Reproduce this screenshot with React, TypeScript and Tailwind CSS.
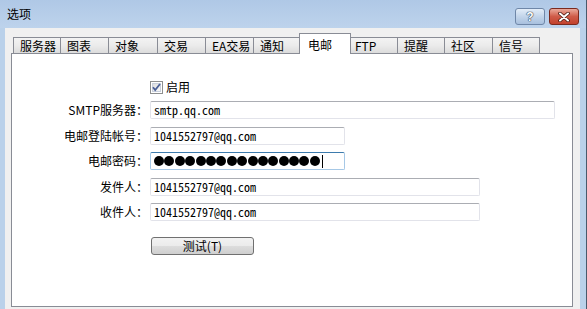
import React from "react";

const tabs: { label: string; w: number; sel?: boolean }[] = [
  { label: "服务器", w: 47 },
  { label: "图表", w: 48 },
  { label: "对象", w: 49 },
  { label: "交易", w: 48 },
  { label: "EA交易", w: 48 },
  { label: "通知", w: 47 },
  { label: "电邮", w: 48, sel: true },
  { label: "FTP", w: 49 },
  { label: "提醒", w: 47 },
  { label: "社区", w: 48 },
  { label: "信号", w: 47 },
];

const mono = "font-['Noto_Sans_Mono_CJK_SC','Liberation_Mono',monospace]";

function TextBox({ w, value }: { w: number; value: string }) {
  return (
    <div
      className={`h-[18px] flex items-center pl-[3px] bg-white rounded-[2px] border border-[#e2e3ea] border-t-[#abadb3] text-[12px] text-black ${mono}`}
      style={{ width: w }}
    >
      {value}
    </div>
  );
}

function Row({ label, children, mt }: { label: string; children: React.ReactNode; mt: string }) {
  return (
    <div className={`flex items-center ${mt}`}>
      <div className="w-[136px] text-right text-[12px] leading-[18px] whitespace-nowrap pr-[0px]">{label}</div>
      <div className="ml-[2px]">{children}</div>
    </div>
  );
}

export default function App() {
  return (
    <div className="w-[587px] h-[309px] overflow-hidden flex flex-col bg-[#bad1ea] border-r border-[#4a5a6c] font-['Noto_Sans_CJK_SC',sans-serif] text-black">
      {/* title bar */}
      <div className="h-[28px] flex items-start bg-gradient-to-b from-[#afc8e6] to-[#bdd3ec]">
        <span className="ml-[7px] mt-[6px] text-[12px] leading-[16px]">选项</span>
        <div className="ml-auto mt-[8px] mr-[7px] flex gap-[4px]">
          <div className="w-[30px] h-[17px] rounded-[3px] border border-[#6f87a8] bg-gradient-to-b from-[#e3edf8] via-[#c3d5ea] to-[#a8c0de] flex items-center justify-center">
            <span className="text-white text-[12px] font-bold leading-none font-['Liberation_Sans',sans-serif] [text-shadow:0_0_1px_#2d3d55,0_0_1px_#2d3d55,0_0_1px_#2d3d55]">?</span>
          </div>
          <div className="w-[30px] h-[17px] rounded-[3px] border border-[#7b2a1e] bg-gradient-to-b from-[#e9a99b] via-[#cf5b48] to-[#c2412d] flex items-center justify-center">
            <svg width="14" height="10" viewBox="0 0 14 10">
              <path d="M3 1.5 L11 8.5 M11 1.5 L3 8.5" stroke="#4a1a12" strokeWidth="3.6" strokeLinecap="round" />
              <path d="M3 1.5 L11 8.5 M11 1.5 L3 8.5" stroke="#ffffff" strokeWidth="2" strokeLinecap="round" />
            </svg>
          </div>
        </div>
      </div>
      {/* client */}
      <div className="flex-1 ml-[5px] w-[575px] bg-[#f0f0f0] pl-[6px] pr-[7px] pt-[5px]">
        {/* tabs */}
        <div className="h-[20px] flex items-end pl-[2px]">
          {tabs.map((t) =>
            t.sel ? (
              <div
                key={t.label}
                className="relative z-10 -mx-[2px] -mb-px h-[21px] bg-white border border-b-0 border-[#898c95] pl-[8px] text-[12px] leading-[19px] flex items-center"
                style={{ width: t.w + 4 }}
              >
                {t.label}
              </div>
            ) : (
              <div
                key={t.label}
                className="h-[16px] -ml-px first:ml-0 border border-b-0 border-[#898c95] bg-gradient-to-b from-[#f3f3f3] via-[#ebebeb] to-[#dcdcdc] pl-[6px] text-[12px] leading-[15px] flex items-center"
                style={{ width: t.w + 1 }}
              >
                {t.label}
              </div>
            )
          )}
        </div>
        {/* panel */}
        <div className="w-[562px] h-[254px] bg-white border border-[#898c95] flex flex-col">
          <div className="flex items-center mt-[26px] ml-[138px]">
            <svg width="13" height="13" viewBox="0 0 13 13">
              <defs>
                <linearGradient id="cb" x1="0" y1="0" x2="1" y2="1">
                  <stop offset="0" stopColor="#dcdcdc" />
                  <stop offset="1" stopColor="#fbfbfb" />
                </linearGradient>
              </defs>
              <rect x="0.5" y="0.5" width="12" height="12" fill="#fff" stroke="#8e8f8f" />
              <rect x="2.5" y="2.5" width="8" height="8" fill="url(#cb)" stroke="#c9d0dc" />
              <path d="M3 6.2 L5.2 9 L10 3" stroke="#4a5f97" strokeWidth="1.8" fill="none" />
            </svg>
            <span className="ml-[3px] text-[12px] leading-[14px]">启用</span>
          </div>
          <Row label="SMTP服务器：" mt="mt-[7px]">
            <TextBox w={405} value="smtp.qq.com" />
          </Row>
          <Row label="电邮登陆帐号：" mt="mt-[8px]">
            <TextBox w={195} value="1041552797@qq.com" />
          </Row>
          <Row label="电邮密码：" mt="mt-[7px]">
            <div className="w-[195px] h-[18px] flex items-center pl-[3px] bg-white rounded-[2px] border border-[#a6c8e6] border-t-[#3d7bad]">
              <div className="flex gap-[0.4px]">
                {Array.from({ length: 16 }).map((_, i) => (
                  <span key={i} className="w-[10px] h-[10px] rounded-full bg-black" />
                ))}
              </div>
              <span className="ml-[2px] w-px h-[13px] bg-black" />
            </div>
          </Row>
          <Row label="发件人：" mt="mt-[8px]">
            <TextBox w={330} value="1041552797@qq.com" />
          </Row>
          <Row label="收件人：" mt="mt-[7px]">
            <TextBox w={330} value="1041552797@qq.com" />
          </Row>
          <div className="ml-[139px] mt-[16px]">
            <button className="w-[103px] h-[18px] rounded-[3px] border border-[#707070] bg-[linear-gradient(to_bottom,#f2f2f2_0%,#ebebeb_50%,#dddddd_50%,#cfcfcf_100%)] text-[12px] leading-[16px] flex items-center justify-center">
              测试(T)
            </button>
          </div>
        </div>
      </div>
    </div>
  );
}
